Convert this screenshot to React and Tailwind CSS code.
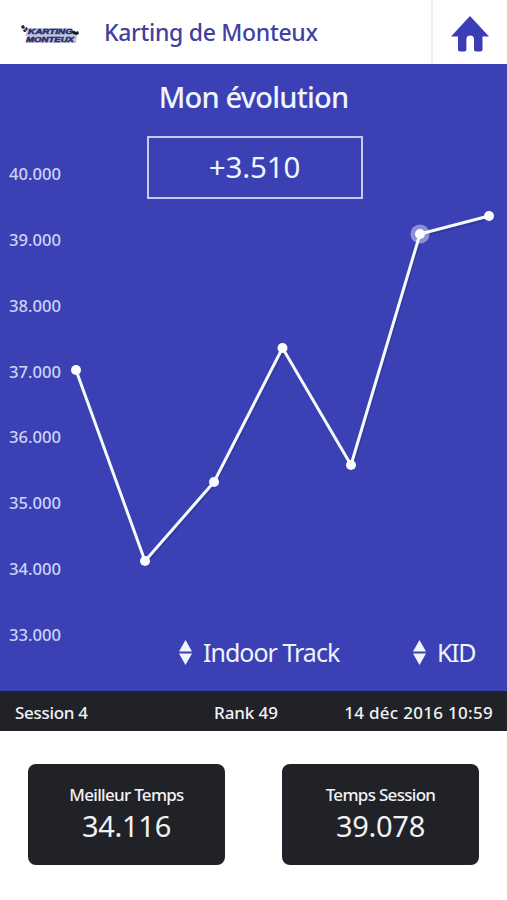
const AXIS = [
  { label: "40.000", y: 110 },
  { label: "39.000", y: 176 },
  { label: "38.000", y: 242 },
  { label: "37.000", y: 308 },
  { label: "36.000", y: 373 },
  { label: "35.000", y: 439 },
  { label: "34.000", y: 505 },
  { label: "33.000", y: 571 },
];

const POINTS = [
  { x: 76, y: 306 },
  { x: 145, y: 497 },
  { x: 214, y: 418 },
  { x: 282.5, y: 284 },
  { x: 351, y: 401 },
  { x: 420, y: 170, active: true },
  { x: 489, y: 152 },
];

function Logo() {
  return (
    <svg width="60" height="20" viewBox="0 0 60 20">
      <path d="M1 2l3-1 1 3-3 1zM5 4l2-1 1 3-2 1zM3 6l2-1 1 3-2 0z" fill="#25262d" />
      <path d="M8 4h44l2 7h3l-1 8H6l2-7H5z" fill="#c0c4da" />
      <g
        fontFamily="Liberation Sans, sans-serif"
        fontWeight="700"
        fontStyle="italic"
        fontSize="7"
        fill="#292d72"
        stroke="#292d72"
        strokeWidth="0.5"
      >
        <text x="8" y="9.8" textLength="45" lengthAdjust="spacingAndGlyphs">
          KARTING
        </text>
        <text x="6" y="17.8" textLength="48" lengthAdjust="spacingAndGlyphs">
          MONTEUX
        </text>
      </g>
      <path d="M52 8l2-1.500 2 1.500 2-1 1 3-3 1-3-1z" fill="#191a20" />
    </svg>
  );
}

function HomeIcon() {
  return (
    <svg width="38" height="36" viewBox="0 0 38 36">
      <path
        d="M19 0L38 20.5H31.5V33.5Q31.5 35.5 29.5 35.5H25Q23 35.5 23 33.5V23.5Q23 19.5 19.2 19.5T15.4 23.5V33.5Q15.4 35.5 13.4 35.5H9Q7 35.5 7 33.5V20.5H0Z"
        fill="#3a3db6"
      />
    </svg>
  );
}

function Chart() {
  return (
    <svg className="absolute inset-0" width="507" height="627" viewBox="0 0 507 627">
      {AXIS.map(({ label, y }) => (
        <text
          key={label}
          x="9"
          y={y + 6}
          fontSize="16.5"
          fontWeight="500"
          fill="#cdd3f5"
          textLength="52"
          lengthAdjust="spacingAndGlyphs"
        >
          {label}
        </text>
      ))}
      <polyline
        points={POINTS.map(({ x, y }) => `${x + 1},${y + 2}`).join(" ")}
        fill="none"
        stroke="#2b2e8c"
        strokeOpacity="0.5"
        strokeWidth="3"
      />
      <polyline
        points={POINTS.map(({ x, y }) => `${x},${y}`).join(" ")}
        fill="none"
        stroke="#f5faff"
        strokeWidth="3"
        strokeLinejoin="round"
      />
      {POINTS.map(({ x, y, active }) => (
        <g key={x}>
          {active && <circle cx={x} cy={y} r="9.5" fill="#fff" fillOpacity="0.42" />}
          <circle cx={x} cy={y} r="5" fill="#fafdff" />
        </g>
      ))}
    </svg>
  );
}

function Selector({ children, className }) {
  return (
    <button className={`flex items-center gap-[11px] leading-8 ${className}`}>
      <svg width="13" height="25" viewBox="0 0 13 25" fill="#f0f4ff">
        <path d="M6.5 0L13 11.500H0zM6.5 25L13 13.500H0z" />
      </svg>
      {children}
    </button>
  );
}

function TimeCard({ label, value }) {
  return (
    <div className="flex h-[101px] w-[197px] flex-col items-center rounded-lg bg-[#202227] pt-[19px] text-[#f1f2f5]">
      <span className="text-[17px] leading-6 font-medium tracking-[-0.7px]">{label}</span>
      <span className="mt-[3px] text-[29px] leading-8 tracking-[-0.3px]">{value}</span>
    </div>
  );
}

export default function App() {
  return (
    <div className="h-[900px] w-[507px] overflow-hidden bg-white font-['Noto_Sans',sans-serif]">
      <header className="flex h-16 items-center bg-white">
        <div className="ml-5 mt-1">
          <Logo />
        </div>
        <h1 className="ml-6 flex-1 whitespace-nowrap text-[23px] leading-8 font-medium tracking-[-0.3px] text-[#413fa0]">
          Karting de Monteux
        </h1>
        <div className="flex h-full w-[76px] items-center justify-center border-l-2 border-[#eeeef1] pt-1">
          <HomeIcon />
        </div>
      </header>

      <section className="relative flex h-[627px] flex-col items-center bg-[#3b40b5] text-[#eef5ff]">
        <Chart />
        <h2 className="mt-[13px] text-[29px] leading-10 font-medium tracking-[-0.8px]">Mon évolution</h2>
        <div className="mt-[19px] ml-[2px] flex h-[63px] w-[216px] items-center justify-center border-2 border-[#c6cbf2] text-[29.5px] tracking-[-0.1px]">
          +3.510
        </div>
        <div className="relative mt-auto mb-[23px] flex w-full items-center">
          <Selector className="ml-[179px] w-[234px] text-[25px] tracking-[-1px]">
            Indoor Track
          </Selector>
          <Selector className="text-[25px] tracking-[-1.4px]">KID</Selector>
        </div>
      </section>

      <div className="grid h-10 grid-cols-[199px_1fr_auto] items-center bg-[#202227] pr-[14px] pl-[15px] pt-[3px] text-[17px] font-medium text-[#f1f2f5]">
        <span className="tracking-[-0.3px]">Session 4</span>
        <span className="tracking-[-0.1px]">Rank 49</span>
        <span className="tracking-[0.3px]">14 déc 2016 10:59</span>
      </div>

      <div className="flex justify-between px-7 pt-[33px]">
        <TimeCard label="Meilleur Temps" value="34.116" />
        <TimeCard label="Temps Session" value="39.078" />
      </div>
    </div>
  );
}
